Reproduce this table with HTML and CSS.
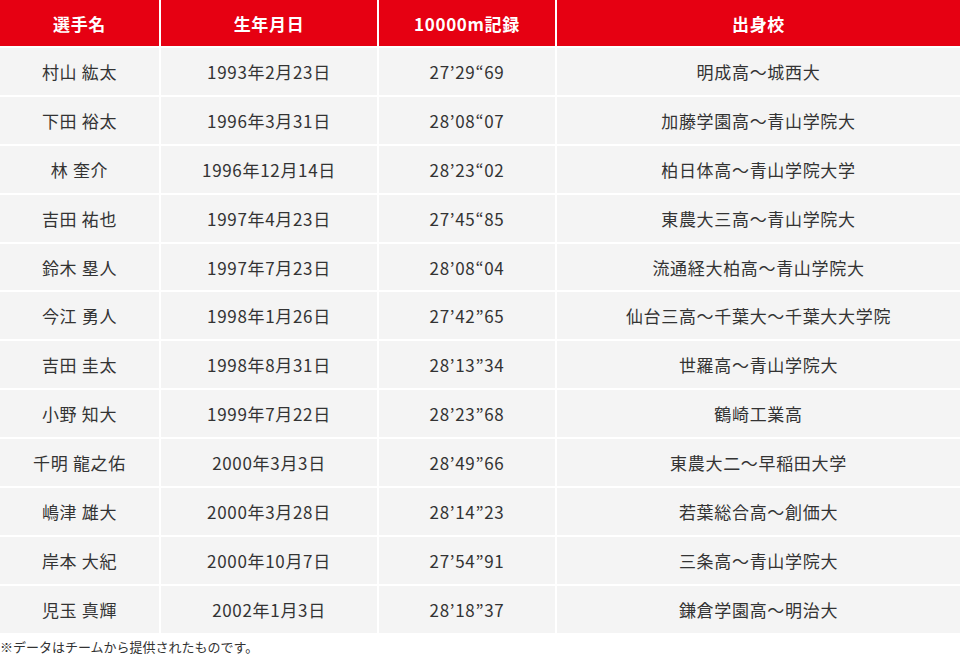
FILE: index.html
```html
<!DOCTYPE html>
<html lang="ja">
<head>
<meta charset="utf-8">
<title>選手一覧</title>
<link rel="stylesheet" href="styles.css">
</head>
<body>
<div class="wrap">
  <table class="roster">
    <colgroup>
      <col class="c-name">
      <col class="c-birth">
      <col class="c-record">
      <col class="c-school">
    </colgroup>
    <thead>
      <tr><th>選手名</th><th>生年月日</th><th>10000m記録</th><th>出身校</th></tr>
    </thead>
    <tbody>
      <tr><td>村山 紘太</td><td>1993年2月23日</td><td>27’29“69</td><td>明成高〜城西大</td></tr>
      <tr><td>下田 裕太</td><td>1996年3月31日</td><td>28’08“07</td><td>加藤学園高〜青山学院大</td></tr>
      <tr><td>林 奎介</td><td>1996年12月14日</td><td>28’23“02</td><td>柏日体高〜青山学院大学</td></tr>
      <tr><td>吉田 祐也</td><td>1997年4月23日</td><td>27’45“85</td><td>東農大三高〜青山学院大</td></tr>
      <tr><td>鈴木 塁人</td><td>1997年7月23日</td><td>28’08“04</td><td>流通経大柏高〜青山学院大</td></tr>
      <tr><td>今江 勇人</td><td>1998年1月26日</td><td>27’42”65</td><td>仙台三高〜千葉大〜千葉大大学院</td></tr>
      <tr><td>吉田 圭太</td><td>1998年8月31日</td><td>28’13”34</td><td>世羅高〜青山学院大</td></tr>
      <tr><td>小野 知大</td><td>1999年7月22日</td><td>28’23”68</td><td>鶴崎工業高</td></tr>
      <tr><td>千明 龍之佑</td><td>2000年3月3日</td><td>28’49”66</td><td>東農大二〜早稲田大学</td></tr>
      <tr><td>嶋津 雄大</td><td>2000年3月28日</td><td>28’14”23</td><td>若葉総合高〜創価大</td></tr>
      <tr><td>岸本 大紀</td><td>2000年10月7日</td><td>27’54”91</td><td>三条高〜青山学院大</td></tr>
      <tr><td>児玉 真輝</td><td>2002年1月3日</td><td>28’18”37</td><td>鎌倉学園高〜明治大</td></tr>
    </tbody>
  </table>
</div>
<p class="note">※データはチームから提供されたものです。</p>
</body>
</html>
```

FILE: styles.css
```css
html, body {
  margin: 0;
  padding: 0;
  background: #ffffff;
}
body {
  width: 960px;
  font-family: "Noto Sans CJK JP", "Noto Sans", sans-serif;
  color: #333333;
}
.wrap {
  width: 960px;
  overflow: hidden;
}
.roster {
  margin: -2px -2px 0 -2px;
  width: 964px;
  table-layout: fixed;
  border-collapse: separate;
  border-spacing: 2px;
}
.c-name { width: 159px; }
.c-birth { width: 216px; }
.c-record { width: 176px; }
.c-school { width: 403px; }
.roster th,
.roster td {
  padding: 0;
  text-align: center;
  vertical-align: middle;
  font-size: 17px;
  letter-spacing: 0.04em;
  white-space: nowrap;
}
.roster th {
  height: 46px;
  background: #e60012;
  color: #ffffff;
  font-weight: 700;
}
.roster td {
  height: 46.9px;
  background: #f4f4f4;
  color: #333333;
  font-weight: 400;
}
.note {
  margin: 0;
  padding-top: 3px;
  font-size: 13px;
  line-height: 18px;
  letter-spacing: 0;
  color: #333333;
}
```
